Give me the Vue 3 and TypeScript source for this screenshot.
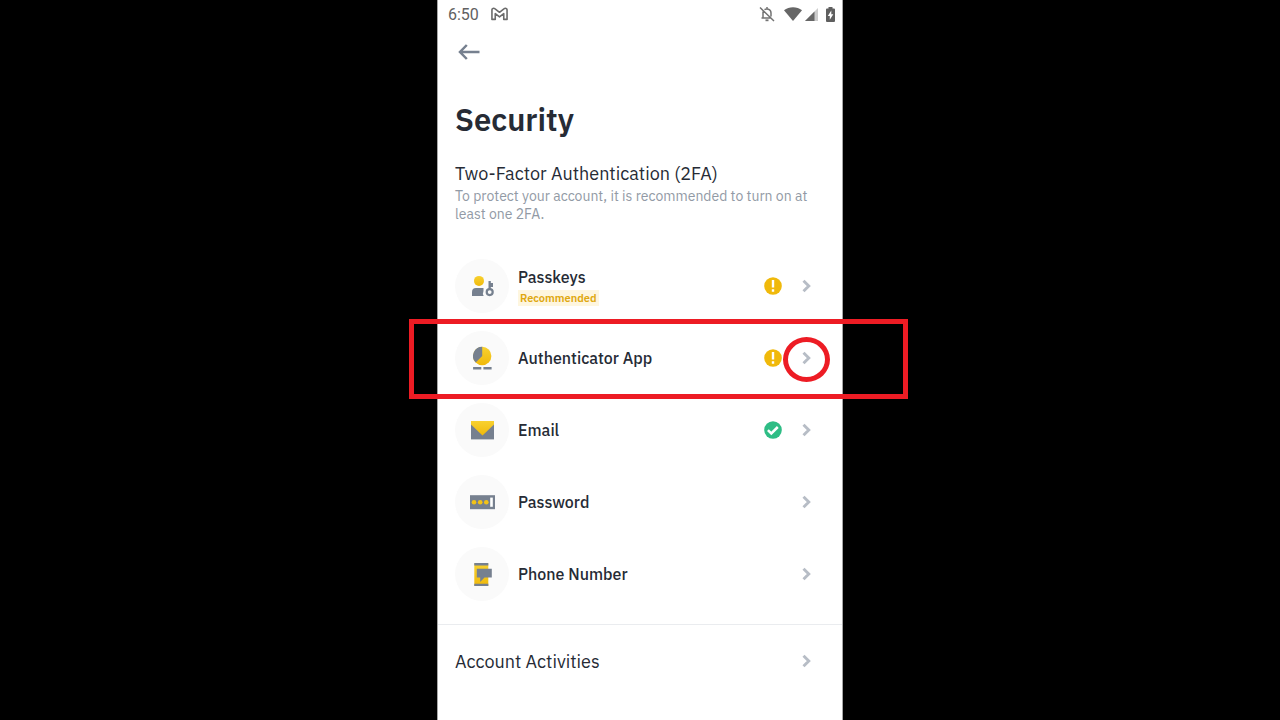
<script setup lang="ts">
type IconName = 'passkeys' | 'authenticator' | 'email' | 'password' | 'phone'

interface SecurityItem {
  icon: IconName
  label: string
  tag?: string
  status?: 'warning' | 'ok'
  highlighted?: boolean
}

const items: SecurityItem[] = [
  { icon: 'passkeys', label: 'Passkeys', tag: 'Recommended', status: 'warning' },
  { icon: 'authenticator', label: 'Authenticator App', status: 'warning', highlighted: true },
  { icon: 'email', label: 'Email', status: 'ok' },
  { icon: 'password', label: 'Password' },
  { icon: 'phone', label: 'Phone Number' },
]
</script>

<template>
  <div class="stage">
    <main class="phone">
      <div class="statusbar">
        <span class="clock">6:50</span>
        <svg class="mail" width="17" height="14" viewBox="0 0 18 14" fill="none" stroke="#6b6b6b" stroke-width="1.7" stroke-linejoin="round">
          <path d="M1 12.700V2.600C1 1 2.900.5 4 1.400L9 5.200l5-3.800c1.100-.9 3-.4 3 1.200v10.100h-3.500V6.600L9 10 4.500 6.600v6.100z" />
        </svg>
        <span class="spacer"></span>
        <svg width="16" height="16" viewBox="0 0 16 16" fill="none" stroke="#737373" stroke-width="1.5">
          <path d="M1 1.500l14 13.500M5.500 3.600C7.500 2.300 12 3 12 7v3.500M4 5.500V12h8.500M2.500 12h2M8 1v1.500" />
          <path d="M6.500 14.300h3" stroke-width="1.800" />
        </svg>
        <svg class="wifi" width="18" height="14" viewBox="0 0 18 14" fill="#666">
          <path d="M9 14L0 3.200C5-.7 13-.7 18 3.200z" />
        </svg>
        <svg class="signal" width="13" height="13" viewBox="0 0 13 13">
          <path d="M13 0v13H0z" fill="#ccc" />
          <path d="M9.500 3.500V13H0z" fill="#666" />
        </svg>
        <svg class="battery" width="9" height="15" viewBox="0 0 9 15">
          <path d="M2.500 0h4v1.500H8q1 0 1 1V14q0 1-1 1H1q-1 0-1-1V2.500q0-1 1-1h1.500z" fill="#5f5f5f" />
          <path d="M5.300 3.500L1.800 9h2v3.700L7.300 7.200h-2z" fill="#fff" />
        </svg>
      </div>

      <button class="back" type="button" aria-label="Back">
        <svg width="22" height="16" viewBox="0 0 22 16" fill="none" stroke="#76808f" stroke-width="2.500">
          <path d="M21.500 8H2M8.800 1L2 8l6.800 7" />
        </svg>
      </button>

      <header class="intro">
        <h1>Security</h1>
        <h2>Two-Factor Authentication (2FA)</h2>
        <p>To protect your account, it is recommended to turn on at least one 2FA.</p>
      </header>

      <ul class="list">
        <li v-for="item in items" :key="item.icon">
          <button class="row" type="button">
            <span class="badge">
              <svg width="28" height="28" viewBox="-0.5 -0.4 28 28">
                <defs>
                  <linearGradient :id="`gold-${item.icon}`" x1="0" y1="0" x2="0" y2="1">
                    <stop offset="0" stop-color="#f8d12f" />
                    <stop offset="1" stop-color="#f0b90b" />
                  </linearGradient>
                </defs>
                <g v-if="item.icon === 'passkeys'">
                  <circle cx="10.500" cy="8.500" r="5" :fill="`url(#gold-${item.icon})`" />
                  <path d="M3.500 23.700v-4q0-4 4-4H15v3q-1.200 2.500.2 5z" fill="#76808f" />
                  <circle cx="21.200" cy="19.700" r="3" fill="none" stroke="#76808f" stroke-width="2.200" />
                  <path d="M20 8.500h2.300v2h2.200v4h-2.200V17H20z" fill="#76808f" />
                </g>
                <g v-else-if="item.icon === 'authenticator'">
                  <circle cx="13.700" cy="11.600" r="9.200" :fill="`url(#gold-${item.icon})`" />
                  <path d="M13.700 11.600V2.400A9.200 9.200 0 0 0 7.200 18.100z" fill="#76808f" />
                  <path d="M4.600 22.700h8.200v2.300H4.600zM14.900 22.700h8.200v2.300h-8.200z" fill="#76808f" />
                </g>
                <g v-else-if="item.icon === 'email'">
                  <path d="M2.500 4.700h23v18.300h-23z" fill="#76808f" />
                  <path d="M2.500 4.700h23v3.500L14 19.200 2.500 8.200z" :fill="`url(#gold-${item.icon})`" />
                </g>
                <g v-else-if="item.icon === 'password'">
                  <path d="M1.500 6.800h25v14h-25z" fill="#76808f" />
                  <path d="M21.700 9.200h2.600v9.200h-2.600z" fill="#fff" />
                  <circle v-for="x in [5.500, 11.700, 17.800]" :key="x" :cx="x" cy="13.800" r="2.300" fill="#f3c316" />
                </g>
                <g v-else>
                  <path d="M5.800 3h14v22.500h-14z" :fill="`url(#gold-${item.icon})`" />
                  <path d="M5.800 2.500h14V5h-14zM5.800 23.300h14v2.300h-14z" fill="#76808f" />
                  <path d="M8.300 8.300h15V17H16l-4.300 4.500V17H8.300z" fill="#76808f" />
                </g>
              </svg>
            </span>
            <span class="text">
              <span class="label">{{ item.label }}</span>
              <span v-if="item.tag" class="tag">{{ item.tag }}</span>
            </span>
            <svg v-if="item.status === 'warning'" width="18" height="18" viewBox="0 0 18 18">
              <circle cx="9" cy="9" r="8.800" fill="#f0b90b" />
              <path d="M7.800 3h2.400v7.500H7.800zM7.800 12.200h2.400v2.500H7.800z" fill="#fff" />
            </svg>
            <svg v-else-if="item.status === 'ok'" width="18" height="18" viewBox="0 0 18 18">
              <circle cx="9" cy="9" r="8.800" fill="#2ebd85" />
              <path d="M3.900 9.200l3.400 3.300 6.500-6.500" fill="none" stroke="#fff" stroke-width="2.500" />
            </svg>
            <svg class="chevron" width="9" height="14" viewBox="0 0 9 14" fill="none" stroke="#b7bdc6" stroke-width="2.900">
              <path d="M1.500 1.700L6.800 7l-5.300 5.300" />
            </svg>
          </button>
          <template v-if="item.highlighted">
            <span class="mark-box"></span>
            <span class="mark-ring"></span>
          </template>
        </li>
      </ul>

      <button class="row activities" type="button">
        <span class="text">Account Activities</span>
        <svg class="chevron" width="9" height="14" viewBox="0 0 9 14" fill="none" stroke="#b7bdc6" stroke-width="2.900">
          <path d="M1.500 1.700L6.800 7l-5.300 5.300" />
        </svg>
      </button>
    </main>
  </div>
</template>

<style>
body {
  background: #000;
}
</style>

<style scoped>
.stage {
  display: flex;
  justify-content: center;
  min-height: 100vh;
  overflow: hidden;
  background: #000;
  font-family: "IBM Plex Sans", Roboto, "Liberation Sans", sans-serif;
  color: #262b35;
}
.phone {
  box-sizing: border-box;
  width: 100%;
  max-width: 406px;
  background: #fff;
  border: solid #a6a6a6;
  border-width: 0 1px;
}
svg {
  flex: none;
  display: block;
}
.statusbar {
  display: flex;
  align-items: center;
  height: 28px;
  padding: 0 7px 0 10px;
}
.clock {
  font-family: Roboto, sans-serif;
  font-size: 16px;
  color: #616161;
}
.mail {
  margin-left: 12px;
}
.spacer {
  flex: 1;
}
.wifi {
  margin-left: 9px;
}
.signal {
  margin-left: 3px;
}
.battery {
  margin-left: 8px;
}
button {
  border: 0;
  margin: 0;
  background: none;
  font: inherit;
  color: inherit;
  text-align: left;
  cursor: pointer;
}
.back {
  display: block;
  padding: 16px 20px;
}
.intro {
  padding: 24px 17px 27px;
}
h1,
h2,
p,
ul {
  margin: 0;
  padding: 0;
}
h1 {
  font-size: 31px;
  line-height: 40px;
  font-weight: 600;
}
h2 {
  margin-top: 22px;
  font-size: 18px;
  line-height: 24px;
  font-weight: 400;
}
p {
  margin-top: 1px;
  font-size: 14px;
  line-height: 18px;
  color: #929aa5;
}
.list {
  list-style: none;
  padding-bottom: 14px;
  border-bottom: 1px solid #eaecef;
}
li {
  position: relative;
}
.row {
  display: flex;
  align-items: center;
  width: 100%;
  height: 72px;
  padding: 0 31px 0 17px;
}
.badge {
  display: grid;
  place-items: center;
  width: 54px;
  height: 54px;
  margin-right: 9px;
  border-radius: 50%;
  background: #fafafa;
}
.text {
  flex: 1;
  display: flex;
  flex-direction: column;
  align-items: flex-start;
}
.label {
  font-size: 16px;
  line-height: 22px;
  font-weight: 500;
}
.tag {
  margin-top: 2px;
  padding: 0 2px;
  font-size: 11px;
  line-height: 16px;
  font-weight: 600;
  color: #e0a80f;
  background: #fef6df;
}
.chevron {
  margin-left: 20px;
}
.activities {
  font-size: 18px;
}
.mark-box,
.mark-ring {
  position: absolute;
  z-index: 1;
  box-sizing: border-box;
  border: 5px solid #ed1c24;
  pointer-events: none;
}
.mark-box {
  inset: -3px -66px -5px -29px;
}
.mark-ring {
  top: 15px;
  right: 12px;
  width: 47px;
  height: 45px;
  border-radius: 50%;
}
</style>
